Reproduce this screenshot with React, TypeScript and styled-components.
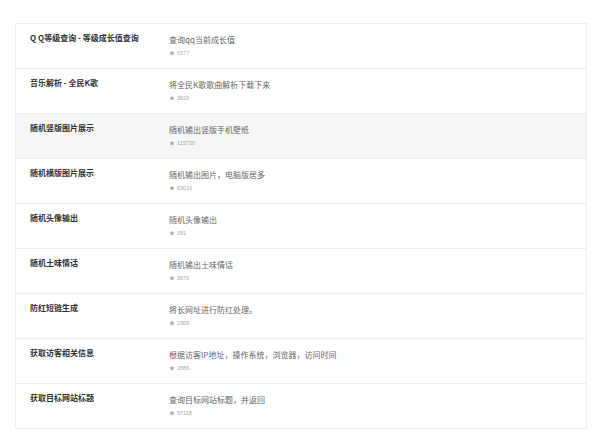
import React from "react";
import styled, { createGlobalStyle } from "styled-components";

const Global = createGlobalStyle`
  body { margin: 0; background: #fff; font-family: "Noto Sans CJK SC", "Liberation Sans", sans-serif; }
`;

const Page = styled.div`
  padding: 23px 24px 0 15px;
`;

const Card = styled.div`
  border: 1px solid #eeeeee;
  border-bottom: none;
`;

const Row = styled.div<{ $hl?: boolean }>`
  display: flex;
  height: 45px;
  border-bottom: 1px solid #eeeeee;
  background: ${(p) => (p.$hl ? "#f6f6f6" : "#fff")};
  padding: 8px 0 0 14px;
  box-sizing: border-box;
`;

const Title = styled.div`
  width: 139px;
  font-size: 8px;
  font-weight: bold;
  color: #333;
  line-height: 12px;
`;

const Info = styled.div`
  display: flex;
  flex-direction: column;
`;

const Desc = styled.div`
  font-size: 8px;
  color: #666;
  line-height: 13px;
  padding-top: 1px;
`;

const Count = styled.div`
  margin-top: 4px;
  font-size: 5.5px;
  color: #aaa;
  font-family: "Liberation Sans", sans-serif;
  display: flex;
  align-items: center;
  gap: 2px;
`;

const data = [
  ["Q Q等级查询 - 等级成长值查询", "查询qq当前成长值", "6577"],
  ["音乐解析 - 全民K歌", "将全民K歌歌曲解析下载下来", "3626"],
  ["随机竖版图片展示", "随机输出竖版手机壁纸", "115730"],
  ["随机横版图片展示", "随机输出图片，电脑版居多", "63016"],
  ["随机头像输出", "随机头像输出", "391"],
  ["随机土味情话", "随机输出土味情话", "3976"],
  ["防红短链生成", "将长网址进行防红处理。", "2305"],
  ["获取访客相关信息", "根据访客IP地址，操作系统，浏览器，访问时间", "2886"],
  ["获取目标网站标题", "查询目标网站标题，并返回", "57118"],
];

const Star = () => (
  <svg width="6" height="6" viewBox="0 0 24 24" fill="#aaa">
    <path d="M12 2l3 7 7.5.6-5.7 5 1.8 7.4L12 18l-6.6 4 1.8-7.4-5.7-5L9 9z" />
  </svg>
);

export default function App() {
  return (
    <Page>
      <Global />
      <Card>
        {data.map(([t, d, c], i) => (
          <Row key={i} $hl={i === 2}>
            <Title>{t}</Title>
            <Info>
              <Desc>{d}</Desc>
              <Count>
                <Star />
                {c}
              </Count>
            </Info>
          </Row>
        ))}
      </Card>
    </Page>
  );
}
